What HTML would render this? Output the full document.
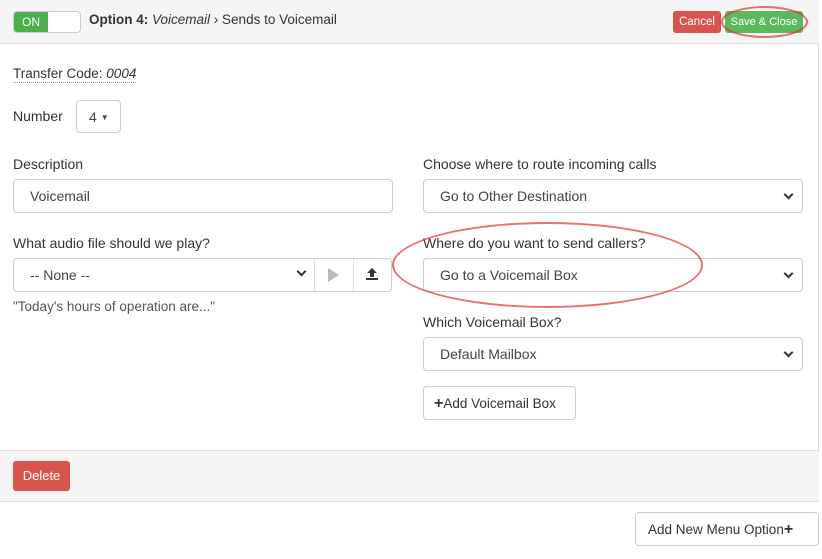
<!DOCTYPE html>
<html><head><style>
*{box-sizing:border-box;margin:0;padding:0}
body{width:822px;height:559px;background:#fff;font-family:"Liberation Sans",sans-serif;font-size:14px;color:#333;position:relative;overflow:hidden}
.a{position:absolute;white-space:nowrap}
.panel{left:0;top:0;width:819px;height:502px;border-right:1px solid #ddd;border-bottom:1px solid #ddd}
.hdr{left:0;top:0;width:819px;height:44px;background:#f5f5f5;border-bottom:1px solid #ddd}
.ftr{left:0;top:450px;width:819px;height:52px;background:#f5f5f5;border-top:1px solid #ddd;border-bottom:1px solid #ddd}
.inp{border:1px solid #ccc;border-radius:4px;background:#fff;height:34px;padding:8px 16px;font-size:14px;color:#444}
.chev{position:absolute;right:10px;top:11px;width:7px;height:7px;border-right:2px solid #333;border-bottom:2px solid #333;transform:rotate(45deg)}
.btn{border-radius:3px;color:#fff;font-size:12px;text-align:center}
.lbl{font-size:14px;color:#333}
</style></head><body>
<div class="a panel"></div>
<div class="a hdr"></div>
<div class="a" style="left:13px;top:11px;width:68px;height:22px;border:1px solid #ccc;border-radius:4px;background:#fff;overflow:hidden">
<div style="width:34px;height:20px;background:#4cae4c;color:#fff;font-size:12px;line-height:20px;text-align:center">ON</div></div>
<div class="a" style="left:89px;top:12px;font-size:13.5px"><b>Option 4:</b> <i>Voicemail</i> › Sends to Voicemail</div>
<div class="a btn" style="left:673px;top:11px;width:48px;height:22px;line-height:22px;background:#d9534f;font-size:11.5px">Cancel</div>
<div class="a btn" style="left:725px;top:11px;width:78px;height:22px;line-height:22px;background:#5cb85c;font-size:11px">Save &amp; Close</div>
<div class="a" style="left:721px;top:6px;width:87px;height:32px;border:2px solid #d33;border-radius:50%;opacity:.7"></div>

<div class="a" style="left:13px;top:66px;border-bottom:1px dotted #999;padding-bottom:1px;font-size:13.5px">Transfer Code: <i>0004</i></div>
<div class="a lbl" style="left:13px;top:108px">Number</div>
<div class="a inp" style="left:76px;top:100px;width:45px;height:33px;padding:8px 12px">4 <span style="font-size:8px;vertical-align:2px">▼</span></div>

<div class="a lbl" style="left:13px;top:156px">Description</div>
<div class="a inp" style="left:13px;top:179px;width:380px">Voicemail</div>
<div class="a lbl" style="left:13px;top:235px">What audio file should we play?</div>
<div class="a inp" style="left:13px;top:258px;width:379px;padding:8px 16px">-- None --</div>
<div class="a" style="left:298px;top:268px;width:7px;height:7px;border-right:2px solid #333;border-bottom:2px solid #333;transform:rotate(45deg)"></div>
<div class="a" style="left:314px;top:259px;width:1px;height:32px;background:#ddd"></div>
<div class="a" style="left:353px;top:259px;width:1px;height:32px;background:#ddd"></div>
<div class="a" style="left:328px;top:268px;width:0;height:0;border-left:11px solid #bbb;border-top:7px solid transparent;border-bottom:7px solid transparent"></div>
<svg class="a" style="left:365px;top:267px" width="14" height="14" viewBox="0 0 14 14"><path d="M7 1L2 6h3v4h4V6h3z M1 11h12v2H1z" fill="#333"/></svg>
<div class="a" style="left:13px;top:299px;color:#555;font-size:13.5px">"Today's hours of operation are..."</div>

<div class="a lbl" style="left:423px;top:156px">Choose where to route incoming calls</div>
<div class="a inp" style="left:423px;top:179px;width:380px">Go to Other Destination<span class="chev"></span></div>
<div class="a lbl" style="left:423px;top:235px">Where do you want to send callers?</div>
<div class="a inp" style="left:423px;top:258px;width:380px">Go to a Voicemail Box<span class="chev"></span></div>
<div class="a" style="left:392px;top:222px;width:311px;height:86px;border:2px solid #d33;border-radius:50%;opacity:.7"></div>
<div class="a lbl" style="left:423px;top:314px">Which Voicemail Box?</div>
<div class="a inp" style="left:423px;top:337px;width:380px">Default Mailbox<span class="chev"></span></div>
<div class="a inp" style="left:423px;top:386px;width:153px;height:34px;padding:8px 10px;color:#333;font-size:13.5px"><b style="font-size:16px">+</b>Add Voicemail Box</div>

<div class="a ftr"></div>
<div class="a btn" style="left:13px;top:461px;width:57px;height:30px;line-height:30px;background:#d9534f;font-size:13px">Delete</div>
<div class="a inp" style="left:635px;top:512px;width:184px;height:34px;padding:8px 12px;color:#333;font-size:13.5px">Add New Menu Option<b style="font-size:16px">+</b></div>
</body></html>
